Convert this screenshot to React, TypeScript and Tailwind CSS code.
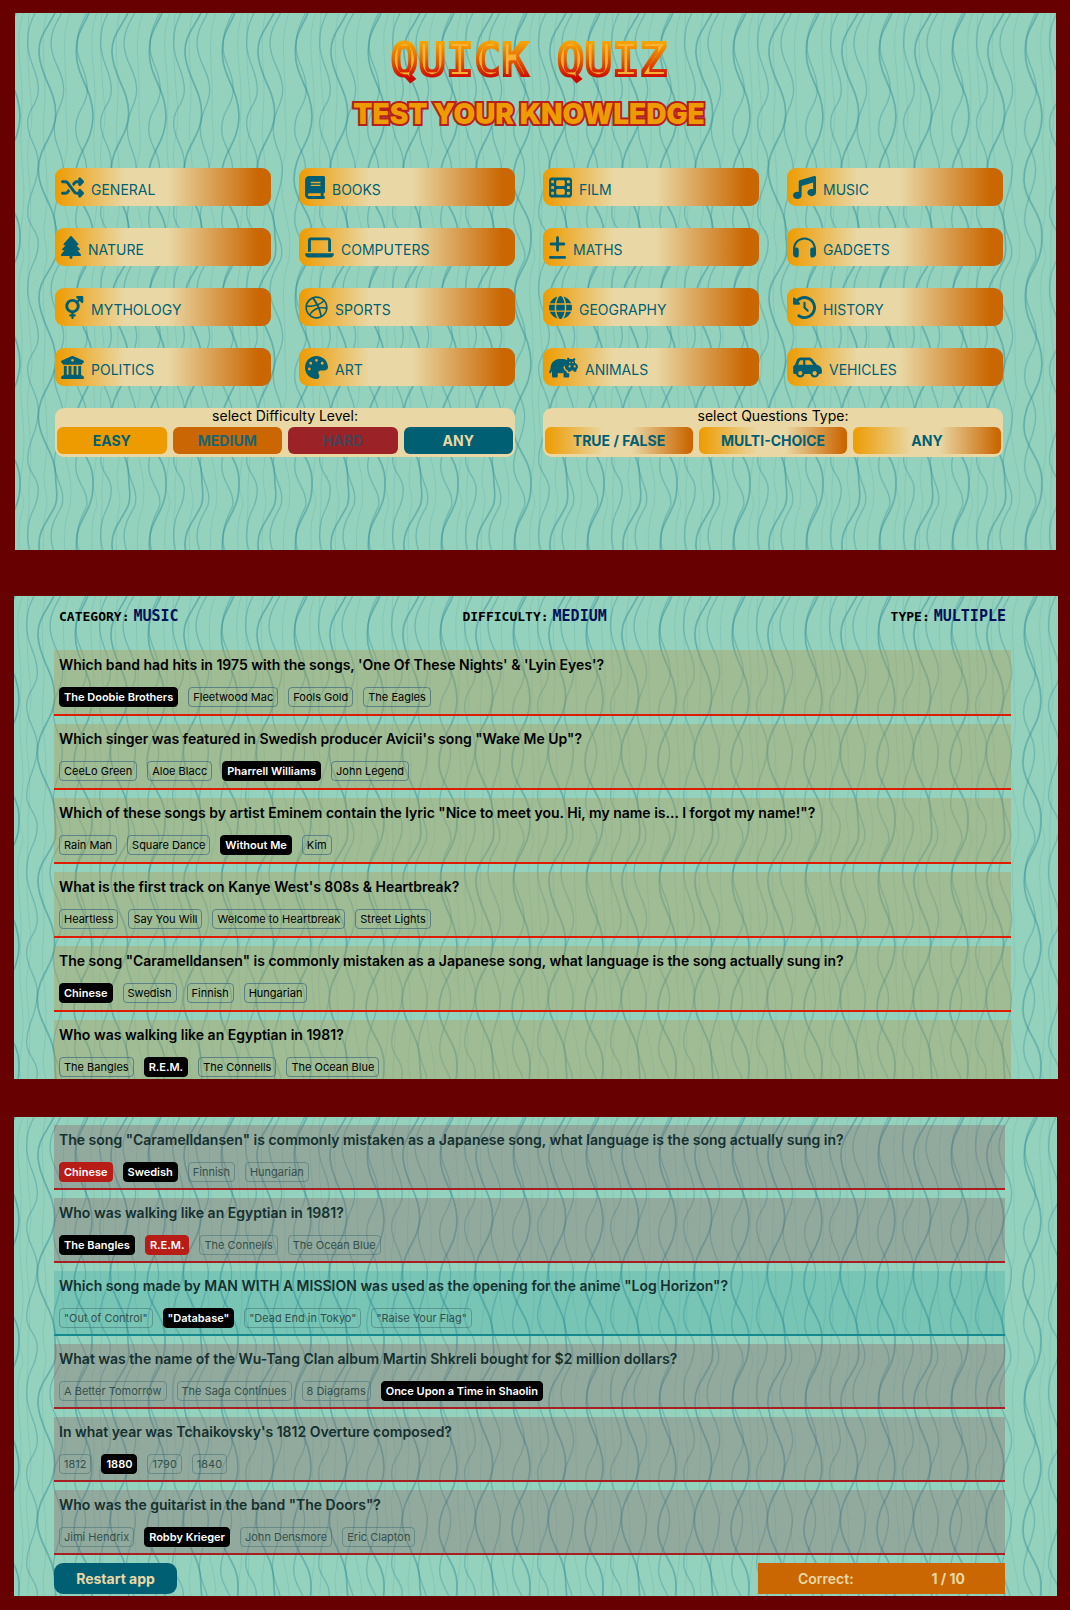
import React, { useId } from "react";
import type { IconType } from "react-icons";
import {
  FaShuffle,
  FaBook,
  FaFilm,
  FaMusic,
  FaTree,
  FaLaptop,
  FaPlusMinus,
  FaHeadphones,
  FaMarsAndVenus,
  FaDribbble,
  FaGlobe,
  FaClockRotateLeft,
  FaBuildingColumns,
  FaPalette,
  FaHippo,
  FaCarSide,
} from "react-icons/fa6";

const narrow = "w-[17px]";
const slim = "w-5";
const square = "w-[23px]";
const wide = "w-[29px]";

const categories: { label: string; icon: IconType; width: string }[] = [
  { label: "GENERAL", icon: FaShuffle, width: square },
  { label: "BOOKS", icon: FaBook, width: slim },
  { label: "FILM", icon: FaFilm, width: square },
  { label: "MUSIC", icon: FaMusic, width: square },
  { label: "NATURE", icon: FaTree, width: slim },
  { label: "COMPUTERS", icon: FaLaptop, width: wide },
  { label: "MATHS", icon: FaPlusMinus, width: narrow },
  { label: "GADGETS", icon: FaHeadphones, width: square },
  { label: "MYTHOLOGY", icon: FaMarsAndVenus, width: square },
  { label: "SPORTS", icon: FaDribbble, width: square },
  { label: "GEOGRAPHY", icon: FaGlobe, width: square },
  { label: "HISTORY", icon: FaClockRotateLeft, width: square },
  { label: "POLITICS", icon: FaBuildingColumns, width: square },
  { label: "ART", icon: FaPalette, width: square },
  { label: "ANIMALS", icon: FaHippo, width: wide },
  { label: "VEHICLES", icon: FaCarSide, width: wide },
];

type Question = { text: string; answers: string[]; picked?: number; right?: number };

const openQuestions: Question[] = [
  {
    text: "Which band had hits in 1975 with the songs, 'One Of These Nights' & 'Lyin Eyes'?",
    answers: ["The Doobie Brothers", "Fleetwood Mac", "Fools Gold", "The Eagles"],
    picked: 0,
  },
  {
    text: "Which singer was featured in Swedish producer Avicii's song \"Wake Me Up\"?",
    answers: ["CeeLo Green", "Aloe Blacc", "Pharrell Williams", "John Legend"],
    picked: 2,
  },
  {
    text: "Which of these songs by artist Eminem contain the lyric \"Nice to meet you. Hi, my name is... I forgot my name!\"?",
    answers: ["Rain Man", "Square Dance", "Without Me", "Kim"],
    picked: 2,
  },
  {
    text: "What is the first track on Kanye West's 808s & Heartbreak?",
    answers: ["Heartless", "Say You Will", "Welcome to Heartbreak", "Street Lights"],
  },
  {
    text: "The song \"Caramelldansen\" is commonly mistaken as a Japanese song, what language is the song actually sung in?",
    answers: ["Chinese", "Swedish", "Finnish", "Hungarian"],
    picked: 0,
  },
  {
    text: "Who was walking like an Egyptian in 1981?",
    answers: ["The Bangles", "R.E.M.", "The Connells", "The Ocean Blue"],
    picked: 1,
  },
];

const gradedQuestions: Question[] = [
  {
    text: "The song \"Caramelldansen\" is commonly mistaken as a Japanese song, what language is the song actually sung in?",
    answers: ["Chinese", "Swedish", "Finnish", "Hungarian"],
    picked: 0,
    right: 1,
  },
  {
    text: "Who was walking like an Egyptian in 1981?",
    answers: ["The Bangles", "R.E.M.", "The Connells", "The Ocean Blue"],
    picked: 1,
    right: 0,
  },
  {
    text: "Which song made by MAN WITH A MISSION was used as the opening for the anime \"Log Horizon\"?",
    answers: ["\"Out of Control\"", "\"Database\"", "\"Dead End in Tokyo\"", "\"Raise Your Flag\""],
    picked: 1,
    right: 1,
  },
  {
    text: "What was the name of the Wu-Tang Clan album Martin Shkreli bought for $2 million dollars?",
    answers: ["A Better Tomorrow", "The Saga Continues", "8 Diagrams", "Once Upon a Time in Shaolin"],
    right: 3,
  },
  {
    text: "In what year was Tchaikovsky's 1812 Overture composed?",
    answers: ["1812", "1880", "1790", "1840"],
    right: 1,
  },
  {
    text: "Who was the guitarist in the band \"The Doors\"?",
    answers: ["Jimi Hendrix", "Robby Krieger", "John Densmore", "Eric Clapton"],
    right: 1,
  },
];

/* Repeating seaweed-like wave lines that fill a panel. */
function Waves() {
  const id = useId();
  const strands = (
    <>
      <g strokeWidth="5" opacity="0.5">
        <path d="M120,0 C95,50 70,70 72,120 C75,190 122,230 122,300 C122,370 70,400 70,470 C70,540 122,580 122,650 C122,690 132,710 120,740" />
        <path d="M222,0 C200,50 184,60 184,120 C184,190 234,230 234,310 C234,390 180,420 180,500 C180,560 234,600 234,660 C234,700 232,715 222,740" />
      </g>
      <g strokeWidth="4" opacity="0.38">
        <path d="M60,0 C45,30 38,50 38,90 C38,150 70,170 70,230 C70,280 38,280 38,330 C38,380 70,400 70,450 C70,520 38,540 38,600 C38,640 70,650 70,690 C70,715 66,725 60,740" />
        <path d="M140,0 C118,40 108,60 108,90 C108,150 146,170 146,230 C146,280 118,290 118,350 C118,400 145,420 145,470 C145,530 118,560 118,610 C118,660 155,690 140,740" />
        <path d="M215,0 C190,50 186,70 186,100 C186,150 217,170 217,230 C217,280 182,290 182,350 C182,400 215,410 215,470 C215,530 182,560 182,620 C182,670 222,690 215,740" />
      </g>
      <g strokeWidth="2.5" opacity="0.2">
        <path d="M95,0 C75,80 90,150 90,230 S80,330 88,400 S100,560 90,620 S100,700 95,740" />
        <path d="M165,0 C135,80 155,150 153,250 S165,370 150,440 S145,560 158,620 S168,700 165,740" />
        <path d="M245,0 C215,80 240,160 240,250 S232,370 240,450 S248,570 238,640 S248,700 245,740" />
        <path d="M42,0 C35,80 38,160 48,260 S34,370 38,440 S52,560 45,640 S44,700 42,740" />
      </g>
    </>
  );
  return (
    <svg className="pointer-events-none absolute inset-0 h-full w-full" aria-hidden="true">
      <defs>
        <pattern id={id} width="219" height="740" patternUnits="userSpaceOnUse" patternTransform="scale(0.3333)">
          <g fill="none" stroke="#2f8a95">
            <g>{strands}</g>
            <g transform="translate(-219 0)">{strands}</g>
          </g>
        </pattern>
      </defs>
      <rect width="100%" height="100%" fill={`url(#${id})`} />
    </svg>
  );
}

/* Wordmark: heat-gradient letters with a thin amber line down the middle of each stroke. */
function Logo() {
  return (
    <svg className="mx-auto block h-[60px] w-[320px]" viewBox="0 0 320 60" role="img" aria-label="Quick Quiz">
      <defs>
        <linearGradient id="logo-heat" gradientUnits="userSpaceOnUse" x1="0" y1="10" x2="0" y2="47">
          <stop offset="0.05" stopColor="#f5a300" />
          <stop offset="0.45" stopColor="#e56a00" />
          <stop offset="1" stopColor="#cc0a00" />
        </linearGradient>
        <filter id="logo-inline" filterUnits="userSpaceOnUse" x="0" y="0" width="320" height="60" colorInterpolationFilters="sRGB">
          <feMorphology in="SourceAlpha" operator="erode" radius="3" result="core" />
          <feFlood floodColor="#f9b233" />
          <feComposite in2="core" operator="in" result="line" />
          <feMerge>
            <feMergeNode in="SourceGraphic" />
            <feMergeNode in="line" />
          </feMerge>
        </filter>
      </defs>
      <text
        x="160"
        y="45"
        textAnchor="middle"
        fontFamily="'DejaVu Sans Mono', monospace"
        fontWeight="700"
        fontSize="46"
        fill="url(#logo-heat)"
        stroke="url(#logo-heat)"
        strokeWidth="2"
        filter="url(#logo-inline)"
      >
        QUICK QUIZ
      </text>
    </svg>
  );
}

function Panel({ label, className, children }: { label: string; className: string; children: React.ReactNode }) {
  return (
    <section aria-label={label} className={`relative overflow-hidden bg-[#94d2bd] ${className}`}>
      <Waves />
      <div className="relative">{children}</div>
    </section>
  );
}

const levelBase = "h-[27px] flex-1 rounded-md text-sm font-bold leading-none";
const levels = [
  { label: "EASY", style: "bg-[#ee9b00] text-[#005f73]" },
  { label: "MEDIUM", style: "bg-[#ca6702] text-[#1d6470]" },
  { label: "HARD", style: "bg-[#9b2226] text-[#4a4256]" },
  { label: "ANY", style: "bg-[#005f73] text-[#e9d8a6]" },
];

function Home() {
  return (
    <Panel label="Quiz setup" className="ml-px mr-0.5 pb-[93px] pl-10 pr-[53px] pt-[18px]">
      <h1>
        <Logo />
      </h1>
      <h2 className="mt-[3px] text-center text-[28px] font-black leading-10 text-[#ee9b00] [-webkit-text-stroke:4px_#b5201c] [paint-order:stroke_fill]">
        TEST YOUR KNOWLEDGE
      </h2>
      <div className="mt-[34px] grid grid-cols-4 gap-x-7 gap-y-[22px]">
        {categories.map(({ label, icon: Icon, width }) => (
          <button
            key={label}
            type="button"
            className="flex h-[38px] items-center gap-[7px] rounded-[9px] bg-[linear-gradient(90deg,#ee9b00_0%,#e9d8a6_33%,#e9d8a6_52%,#ca6702_94%)] px-1.5 text-sm text-[#005f73]"
          >
            <Icon className={`h-[23px] shrink-0 ${width}`} aria-hidden="true" />
            <span className="pt-1.5">{label}</span>
          </button>
        ))}
      </div>
      <div className="mt-[22px] grid grid-cols-2 gap-7">
        <div role="group" aria-labelledby="level-label" className="rounded-[9px] bg-[#e9d8a6] px-0.5 pb-[3px]">
          <p id="level-label" className="mb-[3px] text-center text-sm leading-4 text-black">
            select Difficulty Level:
          </p>
          <div className="flex gap-1.5">
            {levels.map((l) => (
              <button key={l.label} type="button" className={`${levelBase} ${l.style}`}>
                {l.label}
              </button>
            ))}
          </div>
        </div>
        <div role="group" aria-labelledby="type-label" className="rounded-[9px] bg-[#e9d8a6] px-0.5 pb-[3px]">
          <p id="type-label" className="mb-[3px] text-center text-sm leading-4 text-black">
            select Questions Type:
          </p>
          <div className="flex gap-1.5">
            {["TRUE / FALSE", "MULTI-CHOICE", "ANY"].map((t) => (
              <button
                key={t}
                type="button"
                className={`${levelBase} bg-[linear-gradient(90deg,#ee9b00_0%,#e9d8a6_40%,#e9d8a6_58%,#ca6702_98%)] text-[#005f73]`}
              >
                {t}
              </button>
            ))}
          </div>
        </div>
      </div>
    </Panel>
  );
}

function Fact({ name, value }: { name: string; value: string }) {
  return (
    <p className="flex items-baseline gap-1 font-['DejaVu_Sans_Mono',monospace] font-bold leading-5">
      <span className="text-[13px] text-black">{name}:</span>
      <span className="text-[15px] text-[#001257]">{value}</span>
    </p>
  );
}

const chipBase = "h-5 whitespace-nowrap rounded border px-1 text-[11px] leading-none";

function Quiz() {
  return (
    <Panel label="Questions" className="mt-[46px] h-[483px] pl-10 pr-[47px] pt-2.5">
      <header className="flex justify-between px-[5px]">
        <Fact name="CATEGORY" value="MUSIC" />
        <Fact name="DIFFICULTY" value="MEDIUM" />
        <Fact name="TYPE" value="MULTIPLE" />
      </header>
      <div className="mt-[23px] flex flex-col gap-2">
        {openQuestions.map((q) => (
          <article key={q.text} className="h-[66px] border-b-2 border-[#dd1c00] bg-[#ae9b58]/40 px-[5px] pt-[5px]">
            <h3 className="whitespace-nowrap text-sm font-semibold leading-5 text-black">{q.text}</h3>
            <div className="mt-3 flex gap-2.5">
              {q.answers.map((a, i) => (
                <button
                  key={a}
                  type="button"
                  aria-pressed={q.picked === i}
                  className={`${chipBase} ${
                    q.picked === i
                      ? "border-black bg-black font-semibold text-white"
                      : "border-[#3f6b80]/70 text-black"
                  }`}
                >
                  {a}
                </button>
              ))}
            </div>
          </article>
        ))}
      </div>
    </Panel>
  );
}

function Results() {
  return (
    <Panel label="Results" className="mr-px mt-[38px] pb-0.5 pl-10 pr-[52px] pt-2">
      <div className="flex flex-col gap-2">
        {gradedQuestions.map((q) => (
          <article
            key={q.text}
            className={`h-[65px] border-b-2 px-[5px] pt-[5px] ${
              q.picked !== undefined && q.picked === q.right
                ? "border-[#168a8f] bg-[#0a9396]/20"
                : "border-[#a81f22] bg-[#8e4f56]/30"
            }`}
          >
            <h3 className="whitespace-nowrap text-sm font-semibold leading-5 text-[#15302f]">{q.text}</h3>
            <div className="mt-3 flex gap-2.5">
              {q.answers.map((a, i) => (
                <button
                  key={a}
                  type="button"
                  className={`${chipBase} ${
                    q.right === i
                      ? "border-black bg-black font-semibold text-white"
                      : q.picked === i
                        ? "border-[#b81c16] bg-[#b81c16] font-semibold text-white"
                        : "border-[#3f6b70]/50 text-[#34504c]"
                  }`}
                >
                  {a}
                </button>
              ))}
            </div>
          </article>
        ))}
      </div>
      <footer className="mt-2 flex justify-between text-sm font-semibold text-[#e9d8a6]">
        <button type="button" className="h-[31px] w-[123px] rounded-[9px] bg-[#005f73] font-bold">
          Restart app
        </button>
        <p className="flex h-[31px] w-[247px] items-center justify-between bg-[#ca6702] px-10">
          <span>Correct:</span>
          <span className="font-bold">1 / 10</span>
        </p>
      </footer>
    </Panel>
  );
}

export default function App() {
  return (
    <main className="min-h-screen bg-[#670000] pb-3.5 pl-3.5 pr-3 pt-[13px] font-['Inter',sans-serif]">
      <Home />
      <Quiz />
      <Results />
    </main>
  );
}
